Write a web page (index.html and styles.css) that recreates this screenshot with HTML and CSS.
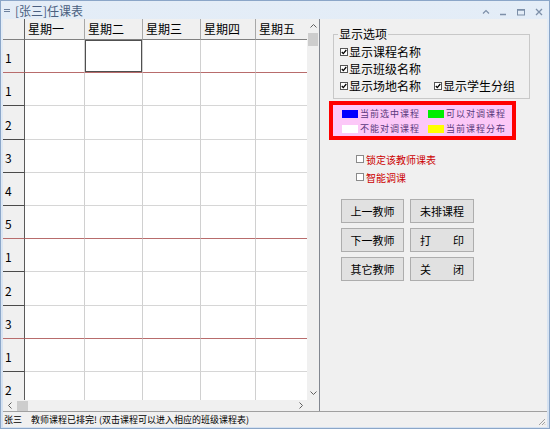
FILE: index.html
```html
<!DOCTYPE html>
<html lang="zh">
<head>
<meta charset="utf-8">
<title>任课表</title>
<link rel="stylesheet" href="styles.css">
</head>
<body>
<div class="window">
  <div class="titlebar">
    <svg class="sysicon" width="6" height="5" viewBox="0 0 6 5"><path d="M0 1.5H6M0 3.5H6" stroke="#6b7f9c" stroke-width="1"/></svg>
    <span class="title">[张三]任课表</span>
    <div class="controls">
      <svg width="8" height="6" viewBox="0 0 8 6"><path d="M1 4.5L4 1.5L7 4.5" fill="none" stroke="#7d8fa8" stroke-width="1.2"/></svg>
      <svg width="8" height="8" viewBox="0 0 8 8"><path d="M1 6.5H7" stroke="#7d8fa8" stroke-width="1.5"/></svg>
      <svg width="10" height="8" viewBox="0 0 10 8"><rect x="1.5" y="1.5" width="7" height="5.5" fill="none" stroke="#7d8fa8"/><path d="M1.5 2H8.5" stroke="#7d8fa8" stroke-width="1.5"/></svg>
      <svg width="8" height="8" viewBox="0 0 8 8"><path d="M1 1L7 7M7 1L1 7" stroke="#7d8fa8" stroke-width="1.3"/></svg>
    </div>
  </div>

  <div class="main">
    <div class="gridwrap">
      <div class="gridtop">
        <div class="grid">
          <div class="hrow">
            <div class="hc"></div>
            <div class="hc">星期一</div>
            <div class="hc">星期二</div>
            <div class="hc">星期三</div>
            <div class="hc">星期四</div>
            <div class="hc">星期五</div>
          </div>
          <div class="gbody">
            <div class="row sep"><div class="rh">1</div><div class="c"></div><div class="c sel"></div><div class="c"></div><div class="c"></div><div class="c"></div></div>
            <div class="row"><div class="rh">1</div><div class="c"></div><div class="c"></div><div class="c"></div><div class="c"></div><div class="c"></div></div>
            <div class="row tall"><div class="rh">2</div><div class="c"></div><div class="c"></div><div class="c"></div><div class="c"></div><div class="c"></div></div>
            <div class="row"><div class="rh">3</div><div class="c"></div><div class="c"></div><div class="c"></div><div class="c"></div><div class="c"></div></div>
            <div class="row"><div class="rh">4</div><div class="c"></div><div class="c"></div><div class="c"></div><div class="c"></div><div class="c"></div></div>
            <div class="row sep"><div class="rh">5</div><div class="c"></div><div class="c"></div><div class="c"></div><div class="c"></div><div class="c"></div></div>
            <div class="row"><div class="rh">1</div><div class="c"></div><div class="c"></div><div class="c"></div><div class="c"></div><div class="c"></div></div>
            <div class="row tall"><div class="rh">2</div><div class="c"></div><div class="c"></div><div class="c"></div><div class="c"></div><div class="c"></div></div>
            <div class="row sep"><div class="rh">3</div><div class="c"></div><div class="c"></div><div class="c"></div><div class="c"></div><div class="c"></div></div>
            <div class="row"><div class="rh">1</div><div class="c"></div><div class="c"></div><div class="c"></div><div class="c"></div><div class="c"></div></div>
            <div class="row"><div class="rh">2</div><div class="c"></div><div class="c"></div><div class="c"></div><div class="c"></div><div class="c"></div></div>
          </div>
        </div>
        <div class="vscroll">
          <div class="sbtn v"><svg width="7" height="4" viewBox="0 0 7 4"><path d="M0.5 3.5L3.5 0.5L6.5 3.5" fill="none" stroke="#606060"/></svg></div>
          <div class="vthumb"></div>
          <div class="fill"></div>
          <div class="sbtn v"><svg width="7" height="4" viewBox="0 0 7 4"><path d="M0.5 0.5L3.5 3.5L6.5 0.5" fill="none" stroke="#606060"/></svg></div>
        </div>
      </div>
      <div class="hbar">
        <div class="hscroll">
          <div class="sbtn h"><svg width="4" height="7" viewBox="0 0 4 7"><path d="M3.5 0.5L0.5 3.5L3.5 6.5" fill="none" stroke="#606060"/></svg></div>
          <div class="hthumb"></div>
          <div class="fill"></div>
          <div class="sbtn h"><svg width="4" height="7" viewBox="0 0 4 7"><path d="M0.5 0.5L3.5 3.5L0.5 6.5" fill="none" stroke="#606060"/></svg></div>
        </div>
        <div class="corner"></div>
      </div>
    </div>

    <div class="side">
      <fieldset class="group">
        <legend>显示选项</legend>
        <div class="opt"><svg class="cb" width="8" height="8" viewBox="0 0 8 8"><rect x="0.5" y="0.5" width="7" height="7" fill="#fff" stroke="#555"/><path d="M1.8 4L3.3 5.6L6.3 2" fill="none" stroke="#000" stroke-width="1.3"/></svg>显示课程名称</div>
        <div class="opt"><svg class="cb" width="8" height="8" viewBox="0 0 8 8"><rect x="0.5" y="0.5" width="7" height="7" fill="#fff" stroke="#555"/><path d="M1.8 4L3.3 5.6L6.3 2" fill="none" stroke="#000" stroke-width="1.3"/></svg>显示班级名称</div>
        <div class="opt">
          <span class="optitem"><svg class="cb" width="8" height="8" viewBox="0 0 8 8"><rect x="0.5" y="0.5" width="7" height="7" fill="#fff" stroke="#555"/><path d="M1.8 4L3.3 5.6L6.3 2" fill="none" stroke="#000" stroke-width="1.3"/></svg>显示场地名称</span>
          <span class="optitem second"><svg class="cb" width="8" height="8" viewBox="0 0 8 8"><rect x="0.5" y="0.5" width="7" height="7" fill="#fff" stroke="#555"/><path d="M1.8 4L3.3 5.6L6.3 2" fill="none" stroke="#000" stroke-width="1.3"/></svg>显示学生分组</span>
        </div>
      </fieldset>

      <div class="legendbox">
        <div class="lg"><span class="sw blue"></span>当前选中课程</div>
        <div class="lg"><span class="sw green"></span>可以对调课程</div>
        <div class="lg"><span class="sw white"></span>不能对调课程</div>
        <div class="lg"><span class="sw yellow"></span>当前课程分布</div>
      </div>

      <div class="redopts">
        <div class="ropt"><svg class="cb" width="8" height="8" viewBox="0 0 8 8"><rect x="0.5" y="0.5" width="7" height="7" fill="#fff" stroke="#8a8a8a"/></svg>锁定该教师课表</div>
        <div class="ropt"><svg class="cb" width="8" height="8" viewBox="0 0 8 8"><rect x="0.5" y="0.5" width="7" height="7" fill="#fff" stroke="#8a8a8a"/></svg>智能调课</div>
      </div>

      <div class="buttons">
        <div class="btn">上一教师</div>
        <div class="btn">未排课程</div>
        <div class="btn">下一教师</div>
        <div class="btn">打　　印</div>
        <div class="btn">其它教师</div>
        <div class="btn">关　　闭</div>
      </div>
    </div>
  </div>

  <div class="status">
    <span class="sname">张三</span>
    <span class="smsg">教师课程已排完! (双击课程可以进入相应的班级课程表)</span>
    <svg class="grip" width="8" height="8" viewBox="0 0 8 8"><path d="M7 1L1 7M7 4L4 7M7 6.5L6.5 7" stroke="#a0a0a0" stroke-width="1"/></svg>
  </div>
</div>
</body>
</html>
```

FILE: styles.css
```css
* { box-sizing: border-box; }
html, body { margin: 0; padding: 0; }
body {
  width: 550px;
  height: 429px;
  overflow: hidden;
  background: #ffffff;
  font-family: "Noto Sans CJK SC", "Noto Sans", sans-serif;
  font-size: 12px;
  color: #000;
}

.window {
  width: 550px;
  height: 429px;
  display: flex;
  flex-direction: column;
  border: 1px solid #8ba6c8;
  padding: 0 2px 1px 2px;
  background: linear-gradient(#e4edf7, #d4e1f1);
}

/* title bar */
.titlebar {
  height: 18px;
  flex: none;
  display: flex;
  align-items: center;
  padding-left: 1px;
}
.sysicon { margin-right: 5px; margin-top: 1px; }
.title {
  color: #4a5f80;
  font-size: 12px;
  line-height: 18px;
  margin-top: 2px;
}
.controls {
  margin-left: auto;
  display: flex;
  align-items: center;
  gap: 9px;
  padding-right: 4px;
  margin-top: 3px;
}

/* main */
.main {
  height: 392px;
  flex: none;
  display: flex;
}
.gridwrap {
  width: 317px;
  flex: none;
  display: flex;
  flex-direction: column;
  background: #fff;
  border-right: 1px solid #828790;
}
.gridtop {
  height: 381px;
  display: flex;
}
.grid {
  width: 304px;
  display: flex;
  flex-direction: column;
  overflow: hidden;
}
.hrow, .row {
  display: grid;
  grid-template-columns: 22px 60px 58px 58px 55px 51px;
}
.hrow { height: 21px; flex: none; }
.hc {
  background: #f0f0f0;
  border-right: 1px solid #a8a8a8;
  border-bottom: 1px solid #808080;
  font-size: 12px;
  line-height: 20px;
  padding-left: 3px;
  white-space: nowrap;
  overflow: hidden;
}
.hc:first-child { border-right-color: #606060; }
.hc:last-child { border-right: none; }

.gbody {
  height: 360px;
  overflow: hidden;
}
.row { height: 33px; }
.row.tall { height: 34px; }
.rh {
  background: #f0f0f0;
  border-right: 1px solid #5a5a5a;
  border-bottom: 1px solid #4a4a4a;
  font-size: 12px;
  display: flex;
  align-items: center;
  padding-left: 2px;
  padding-top: 3px;
}
.c {
  border-right: 1px solid #d0d0d0;
  border-bottom: 1px solid #d6d6d6;
}
.c:last-child { border-right: none; }
.c.sel { box-shadow: inset 0 0 0 1px #505050; }
.row.sep .rh, .row.sep .c { border-bottom-color: #b86c6c; }

/* scrollbars */
.vscroll {
  width: 12px;
  background: #f0f0f0;
  display: flex;
  flex-direction: column;
}
.sbtn {
  display: flex;
  align-items: center;
  justify-content: center;
  flex: none;
}
.sbtn.v { height: 14px; }
.sbtn.h { width: 13px; }
.vthumb {
  height: 13px;
  margin: 0 1px;
  background: #cdcdcd;
  flex: none;
}
.fill { flex: 1; }
.hbar {
  height: 11px;
  display: flex;
}
.hscroll {
  width: 304px;
  display: flex;
  background: #f0f0f0;
}
.hthumb {
  width: 11px;
  margin: 1px 0 0 1px;
  background: #cdcdcd;
}
.corner {
  width: 12px;
  background: #f0f0f0;
}

/* side panel */
.side {
  width: 227px;
  flex: none;
  background: #f0f0f0;
  padding-top: 7px;
}
.group {
  margin: 0 0 0 13px;
  width: 197px;
  height: 73px;
  border: 1px solid #c8c8c8;
  padding: 1px 6px 0 6px;
  min-width: 0;
}
.group legend {
  padding: 0 1px;
  margin-left: -2px;
  font-size: 12px;
  line-height: 16px;
}
.opt {
  height: 17px;
  display: flex;
  align-items: center;
  font-size: 12px;
  white-space: nowrap;
}
.optitem { display: flex; align-items: center; }
.optitem.second { margin-left: 13px; }
.cb { margin-right: 1px; flex: none; }

.legendbox {
  margin: 2px 0 0 9px;
  width: 187px;
  height: 39px;
  border: 4px solid #ff0000;
  background: #fcc8f8;
  display: grid;
  grid-template-columns: 86px 1fr;
  grid-auto-rows: 15px;
  padding: 1px 0 0 9px;
}
.lg {
  display: flex;
  align-items: center;
  font-size: 9px;
  letter-spacing: 1px;
  color: #5a3a7c;
  white-space: nowrap;
}
.sw {
  width: 16px;
  height: 8px;
  margin-right: 2px;
  flex: none;
}
.sw.blue { background: #0000ff; }
.sw.green { background: #00ee00; }
.sw.white { background: #ffffff; }
.sw.yellow { background: #ffff00; }

.redopts {
  margin: 10px 0 0 36px;
}
.ropt {
  height: 18px;
  display: flex;
  align-items: center;
  color: #cc0000;
  font-size: 10px;
}
.ropt .cb { margin-right: 2px; }

.buttons {
  margin: 13px 0 0 21px;
  display: grid;
  grid-template-columns: 63px 64px;
  grid-auto-rows: 24px;
  column-gap: 6px;
  row-gap: 5px;
}
.btn {
  background: #e1e1e1;
  border: 1px solid #adadad;
  font-size: 11px;
  display: flex;
  align-items: center;
  justify-content: center;
  white-space: nowrap;
}

/* status */
.status {
  height: 16px;
  flex: none;
  display: flex;
  align-items: center;
  background: #f0f0f0;
  border-top: 1px solid #a0a0a0;
  font-size: 9px;
  padding-left: 1px;
}
.sname { width: 27px; flex: none; }
.grip { margin-left: auto; margin-right: 1px; margin-top: 4px; }
```
